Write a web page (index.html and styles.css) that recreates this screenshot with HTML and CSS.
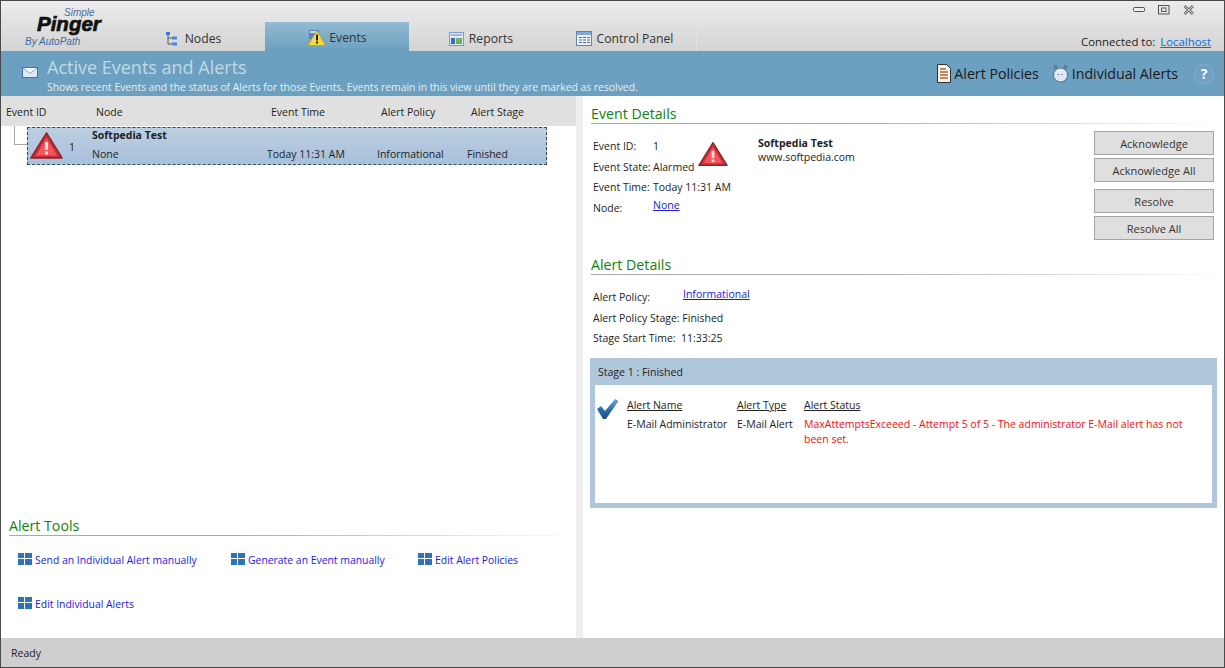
FILE: index.html
```html
<!DOCTYPE html>
<html lang="en">
<head>
<meta charset="utf-8">
<title>Simple Pinger</title>
<link rel="stylesheet" href="styles.css">
</head>
<body>
<div class="window">
  <header class="titlebar">
    <div class="logo">
      <span class="logo-simple">Simple</span>
      <span class="logo-pinger">Pinger</span>
      <span class="logo-by">By AutoPath</span>
    </div>
    <nav class="tabs">
      <div class="tab">
        <svg class="tab-icon" width="16" height="16" viewBox="0 0 16 16"><path d="M3 2v11h4M3 7h4" fill="none" stroke="#555" stroke-width="1"/><rect x="1" y="1" width="4" height="3" fill="#3f78d0"/><rect x="7" y="5.500" width="5" height="3" fill="#4a86dc"/><rect x="7" y="11.500" width="5" height="3" fill="#4a86dc"/></svg>
        <span>Nodes</span>
      </div>
      <div class="tab tab-active">
        <svg class="tab-icon" width="19" height="18" viewBox="0 0 19 18"><rect x="2" y="1" width="10" height="9" fill="#5b80c8"/><rect x="3" y="2" width="8" height="2" fill="#c8d8f0"/><path d="M10 1.500 18.500 16.500H.8Z" fill="#f3d93c" stroke="#b99a20" stroke-width=".7"/><rect x="9" y="5.500" width="2" height="6" fill="#222"/><rect x="9" y="12.500" width="2" height="2" fill="#222"/></svg>
        <span>Events</span>
      </div>
      <div class="tab">
        <svg class="tab-icon" width="16" height="14" viewBox="0 0 16 14"><rect x=".5" y=".5" width="14" height="13" fill="#dfe8f4" stroke="#7f9cc4"/><rect x="2" y="2" width="11" height="2" fill="#9fb9dc"/><rect x="2" y="6" width="4" height="6" fill="#3a6fb5"/><rect x="7" y="6" width="6" height="6" fill="#6db45c"/></svg>
        <span>Reports</span>
      </div>
      <div class="tab tab-last">
        <svg class="tab-icon" width="17" height="15" viewBox="0 0 17 15"><rect x=".5" y=".5" width="15" height="14" fill="#eef3fa" stroke="#5f83bd"/><rect x="1" y="1" width="14" height="3" fill="#88a8dc"/><path d="M3 6.500h3M7 6.500h3M11 6.500h3M3 9h3M7 9h3M11 9h3M3 11.500h3M7 11.500h3M11 11.500h3" stroke="#4a6fb0"/></svg>
        <span>Control Panel</span>
      </div>
    </nav>
    <div class="title-right">
      <div class="winbtns">
        <svg width="12" height="6" viewBox="0 0 12 6"><rect x=".5" y=".5" width="11" height="4" rx="1" fill="#eee" stroke="#555"/></svg>
        <svg width="12" height="10" viewBox="0 0 12 10"><rect x=".5" y=".5" width="10.500" height="8.500" fill="none" stroke="#555"/><rect x="3.500" y="3" width="4.500" height="3.500" fill="none" stroke="#555"/></svg>
        <svg width="12" height="10" viewBox="0 0 12 10"><path d="M1.500 1 10 9M10 1 1.500 9" stroke="#666" stroke-width="2.800"/><path d="M1.500 1 10 9M10 1 1.500 9" stroke="#e8e8e8" stroke-width="1"/></svg>
      </div>
      <div class="connected">Connected to: <a class="conn-link">Localhost</a></div>
    </div>
  </header>

  <section class="banner">
    <svg class="banner-mail" width="16" height="11" viewBox="0 0 16 11"><rect x=".5" y=".5" width="15" height="10" fill="#dfe9f7" stroke="#3f72b8"/><path d="M1 1 8 6.500 15 1" fill="#f4f8fd" stroke="#8aa9d3"/></svg>
    <div class="banner-text">
      <div class="banner-title">Active Events and Alerts</div>
      <div class="banner-sub">Shows recent Events and the status of Alerts for those Events. Events remain in this view until they are marked as resolved.</div>
    </div>
    <div class="banner-actions">
      <span class="banner-action">
        <svg width="14" height="19" viewBox="0 0 14 19"><path d="M.5.5h9l4 4v14H.5Z" fill="#f4f2ea" stroke="#333"/><path d="M3 5h6M3 8h8M3 11h8M3 14h8" stroke="#b5682a" stroke-width="1.500"/></svg>
        Alert Policies
      </span>
      <span class="banner-action">
        <svg width="17" height="19" viewBox="0 0 17 19"><circle cx="3.500" cy="3" r="2.200" fill="#5f7f9f"/><circle cx="13.500" cy="3" r="2.200" fill="#5f7f9f"/><circle cx="8.500" cy="11" r="7" fill="#dfeaf3" stroke="#4c6f90"/><path d="M6 10.500h1M9.500 10.500h1" stroke="#445"/></svg>
        Individual Alerts
      </span>
      <span class="help">?</span>
    </div>
  </section>

  <main class="content">
    <section class="left">
      <div class="col-head">
        <span>Event ID</span><span>Node</span><span>Event Time</span><span>Alert Policy</span><span>Alert Stage</span>
      </div>
      <div class="event-wrap">
        <div class="tree-line"></div>
        <div class="event-row">
          <svg class="row-alert" width="33" height="28" viewBox="0 0 33 28"><path d="M16.500 1 32 26H1Z" fill="#c9303a" stroke="#8e2226" stroke-width="1.500" stroke-linejoin="round"/><path d="M16.500 6 27 23.500H6Z" fill="#f4545c"/><rect x="15" y="10" width="3" height="8" fill="#fbe3e3"/><rect x="15" y="19.500" width="3" height="3" fill="#fbe3e3"/></svg>
          <span class="row-id">1</span>
          <div class="row-main">
            <strong class="row-name">Softpedia Test</strong>
            <div class="row-cols">
              <span>None</span><span>Today 11:31 AM</span><span>Informational</span><span>Finished</span>
            </div>
          </div>
        </div>
      </div>
      <div class="tools">
        <h2 class="section-title">Alert Tools</h2>
        <div class="tool-links">
          <a class="tool-link"><span class="tile"></span>Send an Individual Alert manually</a>
          <a class="tool-link"><span class="tile"></span>Generate an Event manually</a>
          <a class="tool-link"><span class="tile"></span>Edit Alert Policies</a>
          <a class="tool-link"><span class="tile"></span>Edit Individual Alerts</a>
        </div>
      </div>
    </section>

    <div class="splitter"></div>

    <section class="right">
      <h2 class="section-title">Event Details</h2>
      <div class="event-details">
        <div class="detail-grid">
          <span class="lab">Event ID:</span><span>1</span>
          <svg class="detail-alert" width="30" height="27" viewBox="0 0 33 28"><path d="M16.500 1 32 26H1Z" fill="#c9303a" stroke="#8e2226" stroke-width="1.500" stroke-linejoin="round"/><path d="M16.500 6 27 23.500H6Z" fill="#f4545c"/><rect x="15" y="10" width="3" height="8" fill="#fbe3e3"/><rect x="15" y="19.500" width="3" height="3" fill="#fbe3e3"/></svg>
          <span class="lab">Event State:</span><span>Alarmed</span>
          <span class="lab">Event Time:</span><span class="span-val">Today 11:31 AM</span>
          <span class="lab">Node:</span><a class="link link-raise">None</a>
        </div>
        <div class="detail-name">
          <strong>Softpedia Test</strong>
          <span>www.softpedia.com</span>
        </div>
        <div class="buttons">
          <button class="btn">Acknowledge</button>
          <button class="btn">Acknowledge All</button>
          <button class="btn btn-gap">Resolve</button>
          <button class="btn">Resolve All</button>
        </div>
      </div>

      <h2 class="section-title">Alert Details</h2>
      <div class="alert-grid">
        <span>Alert Policy:</span><a class="link link-raise">Informational</a>
        <span>Alert Policy Stage: Finished</span>
        <span>Stage Start Time:&nbsp; 11:33:25</span>
      </div>

      <div class="stage">
        <div class="stage-head">Stage 1 : Finished</div>
        <div class="stage-body">
          <svg class="check" width="23" height="22" viewBox="0 0 23 22"><defs><linearGradient id="chk" x1="0" y1="0" x2="0" y2="1"><stop offset="0" stop-color="#6fa6d6"/><stop offset=".55" stop-color="#2c6ba8"/><stop offset="1" stop-color="#1f4f80"/></linearGradient></defs><path d="M1 11 5 8l4 5L19 1l3.500 2L10 21H7Z" fill="url(#chk)"/></svg>
          <div class="stage-table">
            <u>Alert Name</u><u>Alert Type</u><u>Alert Status</u>
            <span>E-Mail Administrator</span><span>E-Mail Alert</span>
            <span class="status">MaxAttemptsExceeed - Attempt 5 of 5 - The administrator E-Mail alert has not been set.</span>
          </div>
        </div>
      </div>
    </section>
  </main>

  <footer class="statusbar">Ready</footer>
</div>
</body>
</html>
```
FILE: styles.css
```css
* { box-sizing: border-box; }
html, body { margin: 0; padding: 0; }
body {
  width: 1225px;
  height: 668px;
  overflow: hidden;
  font-family: "Open Sans", "Noto Sans", sans-serif;
  font-size: 10.5px;
  color: #222;
  background: #fff;
}
svg { display: block; flex: none; }
.window {
  width: 1225px;
  height: 668px;
  display: flex;
  flex-direction: column;
  border: 1px solid #4a4a4a;
}

/* title bar */
.titlebar {
  height: 50px;
  flex: none;
  display: flex;
  background: linear-gradient(#ececec, #d3d3d3);
}
.logo {
  width: 120px;
  flex: none;
  display: flex;
  flex-direction: column;
  font-family: "Liberation Sans", sans-serif;
  font-style: italic;
  padding: 7px 0 0 24px;
}
.logo-simple { font-size: 10px; line-height: 9px; color: #4d6d96; margin-left: 39px; }
.logo-pinger {
  font-size: 20.500px;
  line-height: 18px;
  font-weight: 700;
  color: #111;
  margin: -2px 0 0 12px;
  -webkit-text-stroke: .7px #111;
}
.logo-by { font-size: 10px; line-height: 12px; color: #3f6aa3; margin-top: 3px; }
.tabs { display: flex; align-self: flex-end; height: 29px; }
.tab {
  width: 144px;
  display: flex;
  justify-content: center;
  align-items: center;
  gap: 4px;
  font-size: 12.200px;
  color: #333;
  padding-top: 4px;
}
.tab-active {
  background: linear-gradient(#93bad2, #6ca0c0);
  padding-top: 2px;
  gap: 3px;
}
.tab-last { border-right: 1px solid #e2e2e2; }
.title-right {
  margin-left: auto;
  padding-right: 13px;
  display: flex;
  flex-direction: column;
  align-items: flex-end;
}
.winbtns {
  display: flex;
  align-items: center;
  gap: 13px;
  height: 18px;
  margin-right: 16px;
}
.connected { margin-top: 15px; font-size: 11.400px; color: #222; }
.conn-link { color: #0a6fd8; text-decoration: underline; margin-left: 2px; }

/* banner */
.banner {
  height: 45px;
  flex: none;
  display: flex;
  align-items: flex-start;
  background: #6ca0c0;
  padding-left: 21px;
}
.banner-mail { margin-top: 16px; }
.banner-text { margin-left: 9px; padding-top: 4px; }
.banner-title { font-size: 18px; line-height: 24px; color: #c2d9e6; }
.banner-sub { font-size: 10.350px; line-height: 12px; color: #e6eff5; margin-top: 2px; }
.banner-actions {
  margin-left: auto;
  display: flex;
  align-items: center;
  height: 45px;
  padding-right: 10px;
  font-size: 14.200px;
  color: #1a1a1a;
}
.banner-action { display: flex; align-items: center; gap: 3px; margin-right: 13px; }
.help {
  width: 20px;
  height: 20px;
  border-radius: 50%;
  background: #6f9fc6;
  border: 1px solid #88aec9;
  color: #fff;
  font-weight: 700;
  font-size: 14px;
  line-height: 18px;
  text-align: center;
  margin-left: 3px;
}

/* content */
.content { flex: 1; display: flex; min-height: 0; }
.left { width: 575px; flex: none; display: flex; flex-direction: column; }
.splitter { width: 7px; flex: none; background: #eeeeee; }
.right { flex: 1; padding: 8px 0 0 8px; min-width: 0; }

.col-head {
  height: 30px;
  flex: none;
  display: grid;
  grid-template-columns: 90px 175px 110px 90px 1fr;
  align-items: center;
  background: #e0e0e0;
  padding: 2px 0 0 5px;
}
.event-wrap { display: flex; height: 38px; flex: none; margin-top: 1px; padding-left: 13px; }
.tree-line {
  width: 13px;
  height: 19px;
  margin-top: -1px;
  border-left: 1px solid #aaa;
  border-bottom: 1px solid #aaa;
}
.event-row {
  width: 520px;
  display: flex;
  align-items: center;
  background: linear-gradient(#bccfe2, #a8c0da);
  border: 1px dashed #3c4a5c;
  padding-left: 2px;
}
.row-id { width: 29px; padding-left: 6px; margin-top: 2px; }
.row-main { flex: 1; align-self: flex-start; }
.row-name { display: block; line-height: 14px; }
.row-cols {
  display: grid;
  grid-template-columns: 175px 110px 90px 1fr;
  line-height: 14px;
  margin-top: 5px;
}

.tools { margin-top: auto; padding-left: 8px; height: 122px; }
.section-title {
  margin: 0;
  font-size: 14.200px;
  font-weight: 400;
  line-height: 19px;
  color: #118011;
  border-bottom: 1px solid;
  border-image: linear-gradient(90deg, #aaa, #aaa 40%, #fff) 1;
  height: 20px;
}
.tool-links {
  display: grid;
  grid-template-columns: 213px 187px 1fr;
  grid-auto-rows: 44px;
  padding: 16px 0 0 9px;
  color: #1a1ae0;
  font-size: 10.400px;
}
.tool-link { display: flex; align-items: flex-start; gap: 3px; line-height: 16px; }
.tile {
  width: 14px;
  height: 12px;
  flex: none;
  margin-top: 1px;
  background:
    linear-gradient(#2e73b8, #2e73b8) 0 0 / 6px 5px no-repeat,
    linear-gradient(#2e73b8, #2e73b8) 100% 0 / 7px 5px no-repeat,
    linear-gradient(#2e73b8, #2e73b8) 0 100% / 6px 6px no-repeat,
    linear-gradient(#2e73b8, #2e73b8) 100% 100% / 7px 6px no-repeat;
}

/* right panel */
.event-details { display: flex; height: 131px; padding: 7px 0 0 2px; }
.detail-grid {
  width: 165px;
  flex: none;
  display: grid;
  grid-template-columns: 60px 45px 30px 30px;
  grid-template-rows: repeat(4, 20.500px);
  align-items: center;
  align-content: start;
  padding-top: 5px;
  white-space: nowrap;
}
.lab { grid-column: 1; }
.detail-alert { grid-column: 3; grid-row: 1 / 3; margin-top: -4px; }
.span-val { grid-column: 2 / 5; }
.link { color: #1a1ae0; text-decoration: underline; }
.link-raise { position: relative; top: -3px; }
.detail-name {
  display: flex;
  flex-direction: column;
  line-height: 14px;
  padding-top: 5px;
}
.buttons {
  margin-left: auto;
  width: 120px;
  margin-right: 10px;
  display: flex;
  flex-direction: column;
  gap: 3px;
}
.btn {
  height: 24px;
  flex: none;
  font: inherit;
  font-size: 11px;
  color: #333;
  background: #dfdfdf;
  border: 1px solid #a4a4a4;
  padding: 0;
}
.btn-gap { margin-top: 4px; }

.alert-grid {
  display: grid;
  grid-template-columns: 90px 1fr;
  grid-template-rows: repeat(3, 20.500px);
  align-items: center;
  padding: 12px 0 0 2px;
  height: 83px;
}
.alert-grid > span:nth-child(n+3) { grid-column: 1 / 3; }
.stage {
  width: 627px;
  height: 150px;
  margin-left: -1px;
  border: 5px solid #b0c6da;
  border-top: none;
  display: flex;
  flex-direction: column;
}
.stage-head {
  height: 27px;
  flex: none;
  background: #b0c6da;
  margin: 0 -5px;
  padding: 6px 0 0 8px;
  line-height: 16px;
}
.stage-body { flex: 1; display: flex; padding: 13px 0 0 1px; }
.check { margin-right: 8px; }
.stage-table {
  display: grid;
  grid-template-columns: 110px 67px 1fr;
  grid-template-rows: 16px auto;
  row-gap: 3px;
  line-height: 15px;
  padding-right: 20px;
  align-content: start;
}
.status { color: #f01010; }

.statusbar {
  height: 29px;
  flex: none;
  background: #cfcfcf;
  padding: 7px 0 0 10px;
  line-height: 16px;
}
```
